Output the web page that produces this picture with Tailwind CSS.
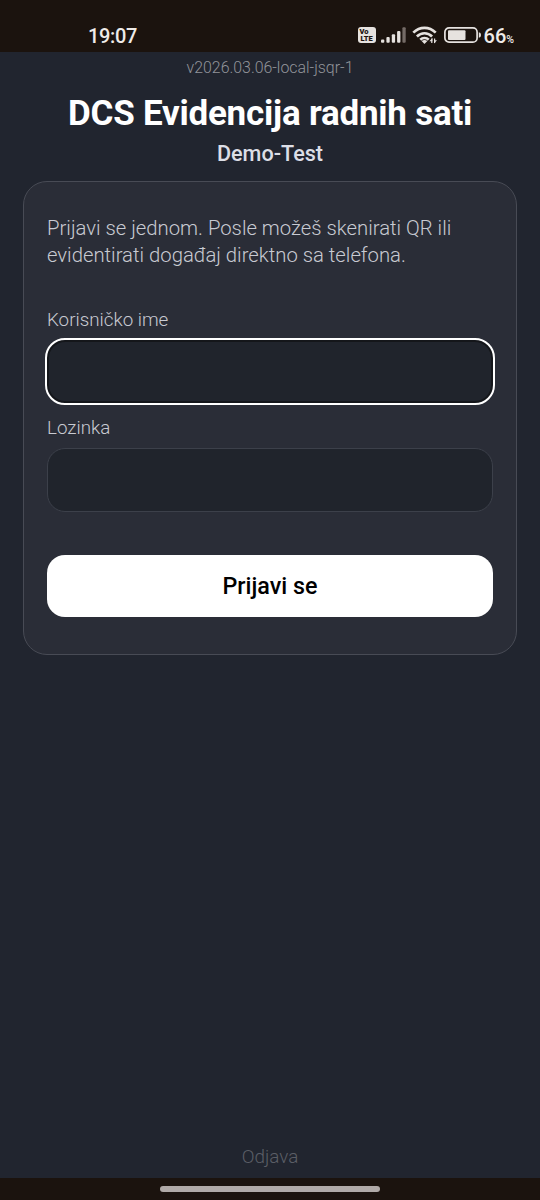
<!DOCTYPE html>
<html lang="sr">
<head>
<meta charset="utf-8">
<title>DCS Evidencija radnih sati</title>
<script src="https://cdn.jsdelivr.net/npm/@tailwindcss/browser@4"></script>
</head>
<body class="font-[Roboto,sans-serif] bg-[#21252f]">
<div class="flex h-[1200px] w-[540px] flex-col overflow-hidden bg-[#21252f]">
  <header class="flex h-[52px] shrink-0 items-end justify-between bg-[#1b130e] pl-[88px] pr-[26px] text-[#efebe8]">
    <span class="mb-[4px] text-[20px] font-medium leading-6 tracking-[-0.35px]">19:07</span>
    <div class="mb-[4px] flex h-6 items-center">
      <div class="mt-[-2px] flex h-[16px] w-[18px] flex-col items-start justify-center rounded-[3px] bg-[#e6e2df] pl-[2px] text-[7.5px] font-black leading-[7px] text-[#1b130e]"><span class="h-[7px]">Vo</span><span class="h-[7px] pl-px">LTE</span></div>
      <svg class="ml-[5px] -mt-[2px]" width="25" height="18" viewBox="0 0 25 18" fill="#e6e2df"><rect x="0" y="13.5" width="3.3" height="3.3" rx="1"/><rect x="5.4" y="11" width="3.3" height="5.8" rx="1"/><rect x="10.8" y="8.2" width="3.3" height="8.600" rx="1"/><rect x="16.1" y="5" width="3.3" height="11.8" rx="1"/><rect x="21.4" y="1.2" width="3.3" height="15.6" rx="1" fill="#746b66"/></svg>
      <svg class="ml-[6px] -mt-[2px]" width="26" height="20" viewBox="0 0 26 20" fill="none" stroke="#e6e2df" stroke-width="2.7"><path d="M1.300 7.600C7.800 1.200 17.200 1.200 23.700 7.600"/><path d="M4.900 11.400C9.300 7.200 15.700 7.200 20.100 11.400"/><path d="M8.300 14.800C10.700 12.400 14.300 12.400 16.700 14.800"/><path d="M9.600 16.100Q12.500 14 15.400 16.100L12.500 18.900Z" fill="#e6e2df" stroke="none"/><path d="M19.800 18V13.500M22.600 13.500V18" stroke-width="1.200"/><path d="M17.400 16.200L20.400 13V16.200ZM25 15.300L22 18.500V15.300Z" fill="#e6e2df" stroke="none"/></svg>
      <svg class="ml-[6px] -mt-[2px]" width="37" height="18" viewBox="0 0 37 18" fill="#e6e2df"><rect x=".9" y="1.900" width="32.200" height="14.200" rx="4.200" fill="none" stroke="#e6e2df" stroke-width="1.700"/><rect x="4" y="4.300" width="17.500" height="9.600" rx="1"/><path d="M34.800 6.200Q37 6.500 37 9T34.800 11.800Z"/></svg>
      <span class="ml-[3px] mt-[3px] flex items-baseline text-[20px] font-medium leading-6">66<span class="text-[10.5px]">%</span></span>
    </div>
  </header>
  <main class="flex flex-1 flex-col items-center px-[23px]">
    <div class="mt-[6px] text-[15.9px] font-light leading-5 text-[#92949a]">v2026.03.06-local-jsqr-1</div>
    <h1 class="mt-[15px] whitespace-nowrap text-[35px] font-bold leading-[42px] tracking-[-0.23px] text-white">DCS Evidencija radnih sati</h1>
    <div class="mt-[5px] text-[21.6px] font-medium leading-7 text-[#dcdee6]">Demo-Test</div>
    <form class="mt-[13px] flex h-[474px] w-full flex-col rounded-[24px] border border-[#484b55] bg-[#2a2d37] px-[23px] pt-[33px]" onsubmit="return false">
      <p class="whitespace-nowrap text-[20.3px] font-light leading-[27px] text-[#c8cad2]">Prijavi se jednom. Posle možeš skenirati QR ili<br>evidentirati događaj direktno sa telefona.</p>
      <label class="mt-[39px] text-[18.8px] font-light leading-6 text-[#c8cad2]">Korisničko ime</label>
      <div class="-mx-[2px] mt-[6px] h-[67px] shrink-0 rounded-[20px] border-2 border-white bg-[#20242c] shadow-[inset_0_0_0_2px_#14161a]"></div>
      <label class="mt-[11px] text-[18.8px] font-light leading-6 text-[#c8cad2]">Lozinka</label>
      <div class="mt-[8px] h-[64px] shrink-0 rounded-[18px] border border-[#3c404a] bg-[#20242c]"></div>
      <button class="mt-[43px] h-[62px] shrink-0 rounded-[18px] bg-white text-[23.3px] font-medium text-black">Prijavi se</button>
    </form>
    <div class="mt-auto mb-[9px] text-[18.9px] font-light leading-6 text-[#5b5e66]">Odjava</div>
  </main>
  <footer class="flex h-[22px] shrink-0 justify-center bg-[#1b130e] pt-[8px]"><div class="h-[6px] w-[220px] rounded-full bg-[#b0aaa8]"></div></footer>
</div>
</body>
</html>
